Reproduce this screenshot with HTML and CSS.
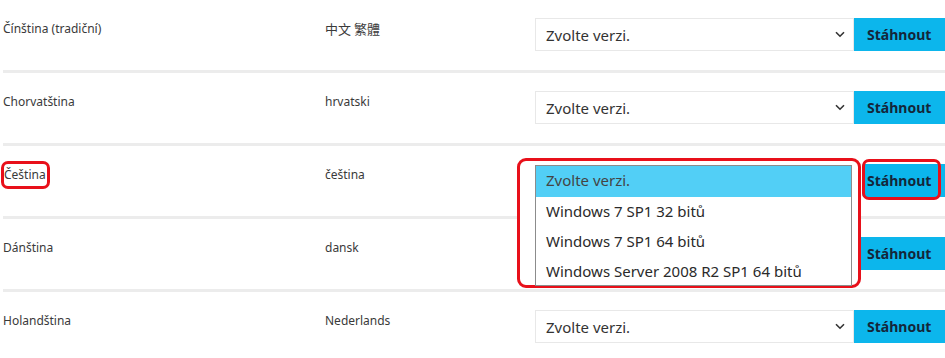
FILE: index.html
```html
<!DOCTYPE html>
<html>
  <head>
    <meta charset="UTF-8">
    <title>Stáhnout</title>
    <link rel="stylesheet" href="styles.css">
  </head>

  <body>
    <div class="list">

      <div class="lang-row">
        <div class="name">Čínština (tradiční)</div>
        <div class="native cjk">中文 繁體</div>
        <div class="pick">
          <div class="select">Zvolte verzi.<span class="chev"><svg width="10" height="7" viewBox="0 0 10 7"><path d="M1 1.2 L5 5.2 L9 1.2" fill="none" stroke="#333" stroke-width="1.6"/></svg></span></div>
        </div>
        <div class="btn">Stáhnout</div>
      </div>

      <div class="lang-row">
        <div class="name">Chorvatština</div>
        <div class="native">hrvatski</div>
        <div class="pick">
          <div class="select">Zvolte verzi.<span class="chev"><svg width="10" height="7" viewBox="0 0 10 7"><path d="M1 1.2 L5 5.2 L9 1.2" fill="none" stroke="#333" stroke-width="1.6"/></svg></span></div>
        </div>
        <div class="btn">Stáhnout</div>
      </div>

      <div class="lang-row">
        <div class="name"><span class="mark-word">Čeština</span></div>
        <div class="native">čeština</div>
        <div class="pick">
          <div class="select">Zvolte verzi.<span class="chev"><svg width="10" height="7" viewBox="0 0 10 7"><path d="M1 1.2 L5 5.2 L9 1.2" fill="none" stroke="#333" stroke-width="1.6"/></svg></span></div>
          <!-- open dropdown with the red note drawn around it -->
          <div class="mark-menu">
            <div class="menu">
              <div class="opt active">Zvolte verzi.</div>
              <div class="opt">Windows 7 SP1 32 bitů</div>
              <div class="opt">Windows 7 SP1 64 bitů</div>
              <div class="opt">Windows Server 2008 R2 SP1 64 bitů</div>
            </div>
          </div>
        </div>
        <div class="btn">Stáhnout<span class="mark-btn"></span></div>
      </div>

      <div class="lang-row">
        <div class="name">Dánština</div>
        <div class="native">dansk</div>
        <div class="pick">
          <!-- covered by the open dropdown above -->
          <div class="select covered">Zvolte verzi.<span class="chev"><svg width="10" height="7" viewBox="0 0 10 7"><path d="M1 1.2 L5 5.2 L9 1.2" fill="none" stroke="#333" stroke-width="1.6"/></svg></span></div>
        </div>
        <div class="btn">Stáhnout</div>
      </div>

      <div class="lang-row">
        <div class="name">Holandština</div>
        <div class="native">Nederlands</div>
        <div class="pick">
          <div class="select">Zvolte verzi.<span class="chev"><svg width="10" height="7" viewBox="0 0 10 7"><path d="M1 1.2 L5 5.2 L9 1.2" fill="none" stroke="#333" stroke-width="1.6"/></svg></span></div>
        </div>
        <div class="btn">Stáhnout</div>
      </div>

    </div>
  </body>
</html>
```

FILE: styles.css
```css
body {
  margin: 0;
  background-color: white;
  font-family: 'Noto Sans', 'Open Sans', sans-serif;
  color: #3a3a3a;
  overflow: hidden;
}

.list {
  padding-left: 3px;
}

.lang-row {
  display: grid;
  grid-template-columns: 322px 210px 319px 95px;
  height: 70px;
  border-bottom: 3px solid #ececec;
}

.name,
.native {
  font-size: 12px;
  padding-top: 21px;
  line-height: 16px;
}

.cjk {
  font-family: 'Noto Sans CJK TC', 'Noto Sans', sans-serif;
  font-size: 13px;
}

.pick {
  position: relative;
  padding-top: 18px;
}

.select {
  display: flex;
  align-items: center;
  justify-content: space-between;
  height: 31px;
  border: 1px solid #e8e8e8;
  padding: 0 8px 0 10px;
  font-size: 15px;
  color: #333;
}

.select.covered {
  visibility: hidden;
}

.chev {
  display: flex;
}

.btn {
  position: relative;
  margin-top: 18px;
  height: 33px;
  line-height: 33px;
  padding-left: 13px;
  background-color: #0cb6ec;
  color: #14263a;
  font-weight: 700;
  font-size: 14px;
}

.mark-word {
  display: inline-block;
  margin-left: -2px;
  padding: 3px 1px 3px 0;
  margin-top: -6px;
  border: 3px solid #e8101a;
  border-radius: 7px;
}

.mark-menu {
  position: absolute;
  left: -18px;
  top: 12px;
  width: 317px;
  height: 114px;
  padding: 4px 6px 6px 15px;
  background-color: white;
  border: 3px solid #e8101a;
  border-radius: 9px;
  z-index: 2;
}

.menu {
  border: 1px solid #8c8c8c;
  height: 119px;
}

.opt {
  height: 30px;
  line-height: 29px;
  padding-left: 10px;
  font-size: 15px;
  color: #2a2a2a;
}

.opt.active {
  height: 31px;
  background-color: #52cff6;
  color: #444;
}

.mark-btn {
  position: absolute;
  left: 8px;
  top: -5px;
  width: 73px;
  height: 35px;
  border: 3px solid #e8101a;
  border-radius: 7px;
  box-shadow: -3px 0 0 white;
}
```
